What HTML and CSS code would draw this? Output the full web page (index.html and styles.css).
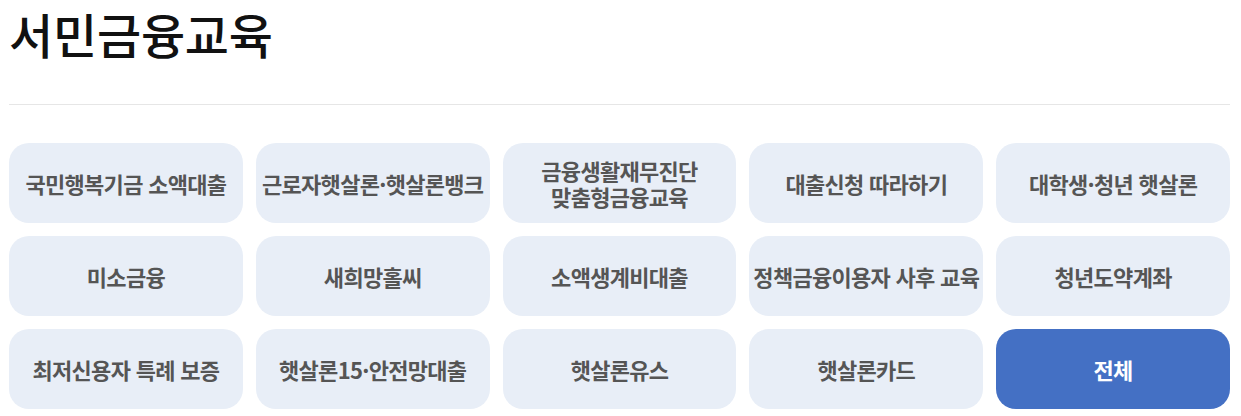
FILE: index.html
```html
<!DOCTYPE html>
<html lang="ko">
<head>
<meta charset="utf-8">
<link rel="stylesheet" href="styles.css">
</head>
<body>
<div class="page">
  <h1 class="title">서민금융교육</h1>
  <hr class="rule">
  <div class="grid">
    <a class="item">국민행복기금 소액대출</a>
    <a class="item">근로자햇살론·햇살론뱅크</a>
    <a class="item">금융생활재무진단<br>맞춤형금융교육</a>
    <a class="item">대출신청 따라하기</a>
    <a class="item">대학생·청년 햇살론</a>
    <a class="item">미소금융</a>
    <a class="item">새희망홀씨</a>
    <a class="item">소액생계비대출</a>
    <a class="item">정책금융이용자 사후 교육</a>
    <a class="item">청년도약계좌</a>
    <a class="item">최저신용자 특례 보증</a>
    <a class="item">햇살론15·안전망대출</a>
    <a class="item">햇살론유스</a>
    <a class="item">햇살론카드</a>
    <a class="item active">전체</a>
  </div>
</div>
</body>
</html>
```
FILE: styles.css
```css
* { box-sizing: border-box; }
html, body { margin: 0; padding: 0; background: #fff; }
body {
  font-family: "Noto Sans CJK KR", "Noto Sans", sans-serif;
}
.page {
  padding: 0 11px 0 9px;
}
.title {
  margin: 0;
  padding-top: 1px;
  font-size: 48px;
  line-height: 64px;
  font-weight: 500;
  color: #111;
  letter-spacing: -0.2px;
}
.rule {
  margin: 39px 0 38px;
  border: 0;
  border-top: 1px solid #e6e6e6;
  height: 0;
}
.grid {
  display: grid;
  grid-template-columns: repeat(5, 1fr);
  column-gap: 13px;
  row-gap: 13px;
}
.item {
  height: 80px;
  display: flex;
  align-items: center;
  justify-content: center;
  text-align: center;
  background: #e8eef7;
  border-radius: 20px;
  color: #555;
  font-size: 22px;
  font-weight: 700;
  line-height: 26px;
  letter-spacing: -0.7px;
}
.item.active {
  background: #4470c4;
  color: #fff;
}
```
